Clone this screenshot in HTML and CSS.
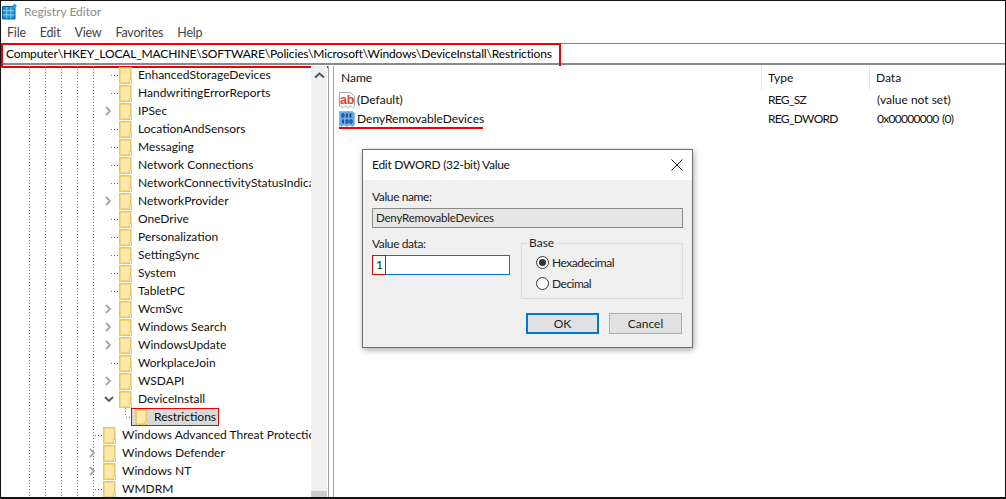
FILE: index.html
```html
<!DOCTYPE html>
<html lang="en">
<head>
<meta charset="utf-8">
<title>Registry Editor</title>
<link rel="stylesheet" href="styles.css">
</head>
<body>
<svg class="defs" width="0" height="0" aria-hidden="true">
  <symbol id="folder" viewBox="0 0 13 17">
    <path d="M.75.75h11v13.500h-1v2H.75z" fill="#fee394" stroke="#eac762" stroke-width="1.500"/>
    <path d="M2 2h8.500v11H9v2H2z" fill="#ffe9a8"/>
    <path d="M10.500 12.500h2v4h-2z" fill="#fff3c9" stroke="#eac762"/>
  </symbol>
  <symbol id="closed" viewBox="0 0 9 12">
    <path d="M2 2l4 4-4 4" fill="none" stroke="#a6a6a6" stroke-width="1.800"/>
  </symbol>
  <symbol id="open" viewBox="0 0 12 9">
    <path d="M2 2l4 4 4-4" fill="none" stroke="#555" stroke-width="1.800"/>
  </symbol>
</svg>
<div class="app">
  <header class="title">
    <svg class="appicon" width="17" height="17" viewBox="0 0 17 17">
      <path d="M.5 3.500h12.500v12.500H.5z" fill="#1c8fdc"/>
      <path d="M.5 7.700h12.500M.5 11.900h12.500M4.700 3.500v12.500M8.900 3.500v12.500" stroke="#8fd0f2" stroke-width="1"/>
      <path d="M.5 3.500h12.500v12.500H.5z" fill="none" stroke="#075d9c"/>
      <path d="M12.500 .5l2.500 2.500-2.500 2.500L10 3z" fill="#2a9fe0"/>
    </svg>
    <span class="title-text">Registry Editor</span>
  </header>
  <nav class="menu"><span>File</span><span>Edit</span><span>View</span><span>Favorites</span><span>Help</span></nav>
  <div class="address"><span>Computer\HKEY_LOCAL_MACHINE\SOFTWARE\Policies\Microsoft\Windows\DeviceInstall\Restrictions</span></div>
  <main class="panes">
    <section class="tree">
      <div class="guides"><i></i><i></i><i></i><i></i><i></i></div>
      <ul class="rows">
        <li class="row l2 dots"><svg class="fld"><use href="#folder"/></svg>EnhancedStorageDevices</li>
        <li class="row l2 dots"><svg class="fld"><use href="#folder"/></svg>HandwritingErrorReports</li>
        <li class="row l2 exp"><svg class="chev"><use href="#closed"/></svg><svg class="fld"><use href="#folder"/></svg>IPSec</li>
        <li class="row l2 dots"><svg class="fld"><use href="#folder"/></svg>LocationAndSensors</li>
        <li class="row l2 dots"><svg class="fld"><use href="#folder"/></svg>Messaging</li>
        <li class="row l2 dots"><svg class="fld"><use href="#folder"/></svg>Network Connections</li>
        <li class="row l2 dots"><svg class="fld"><use href="#folder"/></svg>NetworkConnectivityStatusIndicator</li>
        <li class="row l2 exp"><svg class="chev"><use href="#closed"/></svg><svg class="fld"><use href="#folder"/></svg>NetworkProvider</li>
        <li class="row l2 dots"><svg class="fld"><use href="#folder"/></svg>OneDrive</li>
        <li class="row l2 dots"><svg class="fld"><use href="#folder"/></svg>Personalization</li>
        <li class="row l2 dots"><svg class="fld"><use href="#folder"/></svg>SettingSync</li>
        <li class="row l2 dots"><svg class="fld"><use href="#folder"/></svg>System</li>
        <li class="row l2 dots"><svg class="fld"><use href="#folder"/></svg>TabletPC</li>
        <li class="row l2 exp"><svg class="chev"><use href="#closed"/></svg><svg class="fld"><use href="#folder"/></svg>WcmSvc</li>
        <li class="row l2 exp"><svg class="chev"><use href="#closed"/></svg><svg class="fld"><use href="#folder"/></svg>Windows Search</li>
        <li class="row l2 exp"><svg class="chev"><use href="#closed"/></svg><svg class="fld"><use href="#folder"/></svg>WindowsUpdate</li>
        <li class="row l2 dots"><svg class="fld"><use href="#folder"/></svg>WorkplaceJoin</li>
        <li class="row l2 exp"><svg class="chev"><use href="#closed"/></svg><svg class="fld"><use href="#folder"/></svg>WSDAPI</li>
        <li class="row l2 exp"><svg class="chev down"><use href="#open"/></svg><svg class="fld"><use href="#folder"/></svg>DeviceInstall</li>
        <li class="row l3 dots"><span class="sel"><svg class="fld"><use href="#folder"/></svg><span class="sel-text">Restrictions</span></span></li>
        <li class="row l1 dots"><svg class="fld"><use href="#folder"/></svg>Windows Advanced Threat Protection</li>
        <li class="row l1 exp"><svg class="chev"><use href="#closed"/></svg><svg class="fld"><use href="#folder"/></svg>Windows Defender</li>
        <li class="row l1 exp"><svg class="chev"><use href="#closed"/></svg><svg class="fld"><use href="#folder"/></svg>Windows NT</li>
        <li class="row l1 dots"><svg class="fld"><use href="#folder"/></svg>WMDRM</li>
      </ul>
    </section>
    <aside class="scroll">
      <svg class="thumb-arrow" width="11" height="7" viewBox="0 0 11 7"><path d="M1 5.500l4.500-4 4.500 4" fill="none" stroke="#555" stroke-width="2"/></svg>
      <div class="scroll-thumb"></div>
    </aside>
    <section class="list">
      <div class="list-head"><span class="c-name">Name</span><span class="c-type">Type</span><span class="c-data">Data</span></div>
      <div class="list-row">
        <span class="c-name">
          <svg class="val" width="16" height="16" viewBox="0 0 16 16"><path d="M.5.5h11l4 4v9.500l-2 1.500-2-1.500-2.500 1.500-2.500-1.500-2 1.500-4-1.500z" fill="#fff" stroke="#a8a8a8"/><text class="ab" x="1" y="11.500">ab</text></svg>
          <span>(Default)</span>
        </span>
        <span class="c-type">REG_SZ</span><span class="c-data">(value not set)</span>
      </div>
      <div class="list-row">
        <span class="c-name under">
          <svg class="val" width="16" height="16" viewBox="0 0 16 16"><path d="M.5.5h13l2 2v11l-2 2-3-1.500-2.500 1.500-3-1.500-3 1.500-2-1.500z" fill="#66a9e6" stroke="#8fb9de"/><path d="M8 2.500v4M11.500 2.500v4M4 8.500v4" stroke="#0a3c78" stroke-width="1.600"/><path d="M3 3h2v3H3zM7 9h2v3H7zM11 9h2v3h-2z" fill="none" stroke="#0a3c78"/></svg>
          <span>DenyRemovableDevices</span>
        </span>
        <span class="c-type">REG_DWORD</span><span class="c-data hex">0x00000000 (0)</span>
      </div>
    </section>
  </main>
  <div class="dialog">
    <div class="dlg-title"><span>Edit DWORD (32-bit) Value</span>
      <svg width="12" height="12" viewBox="0 0 12 12"><path d="M.5.500l11 11M11.500.500l-11 11" stroke="#222" fill="none"/></svg>
    </div>
    <div class="dlg-body">
      <div class="lbl">Value name:</div>
      <div class="name-box">DenyRemovableDevices</div>
      <div class="dlg-mid">
        <div class="data-col">
          <div class="lbl">Value data:</div>
          <div class="data-box"><span class="one">1</span></div>
        </div>
        <fieldset class="base">
          <legend>Base</legend>
          <label class="radio"><span class="dot on"></span>Hexadecimal</label>
          <label class="radio"><span class="dot"></span>Decimal</label>
        </fieldset>
      </div>
      <div class="btns"><span class="btn ok">OK</span><span class="btn">Cancel</span></div>
    </div>
  </div>
</div>
</body>
</html>
```
FILE: styles.css
```css
* { box-sizing: border-box; }
html, body { margin: 0; padding: 0; }
body {
  width: 1006px;
  height: 499px;
  overflow: hidden;
  background: #fff;
  font: 12px/16px Lato, "Open Sans", sans-serif;
  color: #000;
}
.defs { position: absolute; }
.app {
  position: relative;
  width: 1006px;
  height: 499px;
  display: flex;
  flex-direction: column;
  border-top: 1px solid #111;
  border-left: 1px solid #111;
  border-right: 1px solid #111;
  border-bottom: 2px solid #111;
  overflow: hidden;
}
.title {
  height: 22px;
  display: flex;
  align-items: center;
  flex: none;
}
.appicon { margin: 0 0 1px 1px; flex: none; }
.title-text { margin-left: 5px; color: #8a8a8a; }
.menu {
  height: 20px;
  flex: none;
  display: flex;
  gap: 14px;
  align-items: center;
  padding-left: 6px;
  color: #444;
  font-size: 12.500px;
  letter-spacing: -.2px;
}
.address {
  height: 22px;
  flex: none;
  margin-left: -1px;
  margin-right: -1px;
  display: flex;
  align-items: center;
  padding-left: 6px;
  border-top: 1px solid #8a8a8a;
  border-bottom: 2px solid #8a8a8a;
  position: relative;
  letter-spacing: -.15px;
}
.address span {
  position: relative;
  z-index: 1;
}
.address::before {
  content: "";
  position: absolute;
  left: 1px;
  top: -1px;
  width: 556px;
  height: 21px;
  border: 2px solid #f00000;
}
.panes { flex: 1; display: flex; min-height: 0; }
.tree {
  position: relative;
  width: 310px;
  flex: none;
  overflow: hidden;
  margin-top: 1px;
}
.guides { position: absolute; inset: 0; }
.guides i {
  position: absolute;
  top: 0;
  bottom: 0;
  width: 1px;
  background: repeating-linear-gradient(#777 0 1px, transparent 1px 3px);
}
.guides i:nth-child(1) { left: 28px; }
.guides i:nth-child(2) { left: 44px; }
.guides i:nth-child(3) { left: 60px; }
.guides i:nth-child(4) { left: 76px; }
.guides i:nth-child(5) { left: 92px; }
.rows { position: relative; list-style: none; margin: 0; padding: 0; }
.row {
  position: relative;
  height: 18px;
  display: flex;
  align-items: center;
  white-space: nowrap;
  color: #111;
}
.l1 { padding-left: 102px; }
.l2 { padding-left: 118px; }
.l3 { padding-left: 130px; }
.fld { width: 13px; height: 17px; flex: none; margin-right: 6px; }
.chev { position: absolute; width: 9px; height: 12px; top: 3px; }
.l2 .chev { left: 103px; }
.l1 .chev { left: 87px; }
.chev.down { width: 12px; height: 9px; top: 5px; left: 102px; }
.dots::before {
  content: "";
  position: absolute;
  top: 9px;
  height: 1px;
  width: 7px;
  background: repeating-linear-gradient(90deg, #777 0 1px, transparent 1px 3px);
}
.l2.dots::before { left: 110px; }
.l1.dots::before { left: 94px; }
.l3.dots::before { left: 125px; width: 5px; }
.l3.dots::after {
  content: "";
  position: absolute;
  left: 124px;
  top: 0;
  height: 9px;
  width: 1px;
  background: repeating-linear-gradient(#777 0 1px, transparent 1px 3px);
}
.sel {
  display: flex;
  align-items: center;
  height: 18px;
  width: 88px;
  border: 1px solid #f00000;
  background: #d9d9d9;
  padding-left: 3px;
}
.sel .fld { height: 16px; margin-right: 6px; }
.scroll {
  position: relative;
  width: 16px;
  flex: none;
  background: #f0f0f0;
  margin-top: 1px;
}
.thumb-arrow { position: absolute; left: 3px; top: 6px; }
.scroll-thumb {
  position: absolute;
  left: 0;
  right: 0;
  bottom: 0;
  height: 6px;
  background: #cdcdcd;
}
.list {
  flex: 1;
  margin-left: 1px;
  margin-top: 1px;
  padding-left: 10px;
  border-left: 1px solid #9aa0a8;
  position: relative;
  background: #fff;
}
.list::before {
  content: "";
  position: absolute;
  left: 4px;
  top: 0;
  bottom: 0;
  width: 1px;
  background: #9aa0a8;
}
.list-head, .list-row {
  display: flex;
  align-items: center;
  white-space: nowrap;
  color: #111;
}
.list-head { height: 24px; }
.list-row { height: 19px; }
.c-name { width: 422px; display: flex; align-items: center; gap: 2px; flex: none; position: relative; }
.list-head .c-name { padding-left: 2px; }
.c-type { width: 108px; flex: none; padding-left: 7px; }
.list-row .c-type { letter-spacing: -.7px; }
.c-data { padding-left: 8px; }
.hex { letter-spacing: -.7px; word-spacing: 1px; }
.list-head .c-type, .list-head .c-data {
  border-left: 1px solid #e5e5e5;
  height: 24px;
  line-height: 24px;
  padding-left: 6px;
}
.ab { font: bold 12.500px "Liberation Sans", sans-serif; fill: #d9482a; letter-spacing: -.2px; }
.val { flex: none; }
.under::after {
  content: "";
  position: absolute;
  left: 0;
  bottom: -2px;
  width: 144px;
  height: 2px;
  background: #f00000;
}
.dialog {
  position: absolute;
  left: 361px;
  top: 148px;
  width: 331px;
  height: 199px;
  background: #f0f0f0;
  border: 1px solid #6e6e6e;
  box-shadow: 1px 2px 6px rgba(0,0,0,.35);
}
.dlg-title {
  height: 30px;
  background: #fff;
  display: flex;
  align-items: center;
  justify-content: space-between;
  padding: 0 9px;
  color: #111;
  letter-spacing: -.28px;
}
.dlg-body { padding: 9px 9px 0; color: #222; }
.lbl { line-height: 16px; letter-spacing: -.4px; }
.name-box {
  margin-top: 3px;
  height: 20px;
  border: 1px solid #8a8a8a;
  background: #e6e6e6;
  padding-left: 3px;
  line-height: 18px;
  width: 311px;
  font-size: 11.500px;
  letter-spacing: -.2px;
}
.dlg-mid { display: flex; margin-top: 8px; }
.data-col { width: 149px; flex: none; }
.data-box {
  margin-top: 3px;
  width: 138px;
  height: 20px;
  border: 1px solid #0078d7;
  background: #fff;
  display: flex;
}
.one {
  width: 14px;
  height: 20px;
  margin: -1px 0 0 -1px;
  border: 1px solid #f00000;
  padding-left: 3px;
  line-height: 18px;
}
.base {
  margin: 0;
  padding: 2px 0 0 14px;
  width: 162px;
  height: 63px;
  border: 1px solid #dcdcdc;
}
.base legend { padding: 0 2px; margin-left: -9px; line-height: 14px; }
.radio { display: flex; align-items: center; height: 21px; gap: 3px; letter-spacing: -.5px; }
.dot {
  width: 13px;
  height: 13px;
  border: 1px solid #333;
  border-radius: 50%;
  background: #fff;
  position: relative;
}
.dot.on::after {
  content: "";
  position: absolute;
  inset: 2px;
  border-radius: 50%;
  background: #333;
}
.btns { display: flex; gap: 10px; margin-top: 14px; margin-left: 154px; }
.btn {
  width: 73px;
  height: 21px;
  background: #e1e1e1;
  border: 1px solid #adadad;
  text-align: center;
  line-height: 19px;
}
.btn.ok { border: 2px solid #0078d7; line-height: 17px; }
```
